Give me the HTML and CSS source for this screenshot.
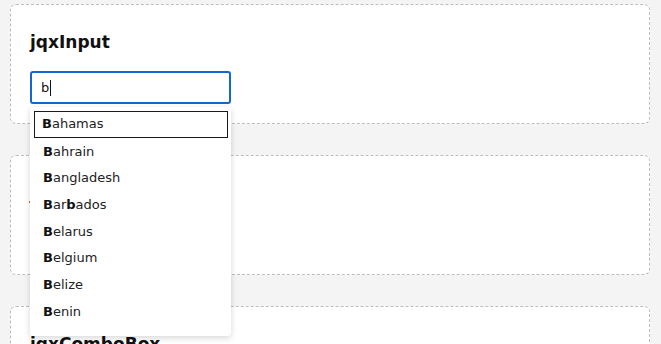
FILE: index.html
```html
<!DOCTYPE html>
<html>
<head>
<meta charset="utf-8">
<link rel="stylesheet" href="styles.css">
</head>
<body>
<div class="page">
  <section class="card">
    <h3 class="title">jqxInput</h3>
    <div class="field">
      <div class="input">b<span class="caret"></span></div>
      <ul class="list">
        <li class="item selected"><b>B</b>ahamas</li>
        <li class="item"><b>B</b>ahrain</li>
        <li class="item"><b>B</b>angladesh</li>
        <li class="item"><b>B</b>ar<b>b</b>ados</li>
        <li class="item"><b>B</b>elarus</li>
        <li class="item"><b>B</b>elgium</li>
        <li class="item"><b>B</b>elize</li>
        <li class="item"><b>B</b>enin</li>
      </ul>
    </div>
  </section>
  <section class="card">
    <h3 class="title">jqxDropDownList</h3>
  </section>
  <section class="card">
    <h3 class="title">jqxComboBox</h3>
  </section>
</div>
</body>
</html>
```
FILE: styles.css
```css
html, body {
  margin: 0;
  padding: 0;
  background: #f4f4f4;
  font-family: "DejaVu Sans", Verdana, sans-serif;
  color: #222;
  overflow: hidden;
}
.page {
  display: flex;
  flex-direction: column;
  gap: 31px;
  padding: 4px 11px 0 10px;
}
.card {
  background: #fff;
  border: 1px dashed #bdbdbd;
  border-radius: 6px;
  height: 120px;
  box-sizing: border-box;
  padding: 27px 19px 19px;
}
.title {
  margin: 0 0 19px;
  font-size: 17px;
  line-height: 20px;
  font-weight: bold;
  color: #111;
}
.field {
  position: relative;
  width: 201px;
}
.input {
  box-sizing: border-box;
  width: 201px;
  height: 33px;
  border: 2px solid #1467d1;
  border-radius: 3px;
  padding: 0 9px;
  font-size: 13px;
  line-height: 29px;
  color: #111;
  display: flex;
  align-items: center;
}
.caret {
  display: inline-block;
  width: 1px;
  height: 16px;
  background: #111;
  margin-left: 1px;
}
.list {
  position: absolute;
  left: 0;
  top: 36px;
  width: 201px;
  height: 229px;
  box-sizing: border-box;
  margin: 0;
  padding: 4px 3px 0 4px;
  list-style: none;
  background: #fff;
  border-radius: 3px;
  box-shadow: 0 2px 6px rgba(0, 0, 0, 0.16);
  z-index: 10;
}
.item {
  box-sizing: border-box;
  height: 26.67px;
  line-height: 26.67px;
  padding-left: 8px;
  font-size: 13px;
  color: #222;
  border: 1px solid transparent;
  white-space: nowrap;
}
.item b {
  color: #111;
}
.item.selected {
  border-color: #1a1a1a;
  line-height: 24.67px;
  padding-left: 7px;
}
```
